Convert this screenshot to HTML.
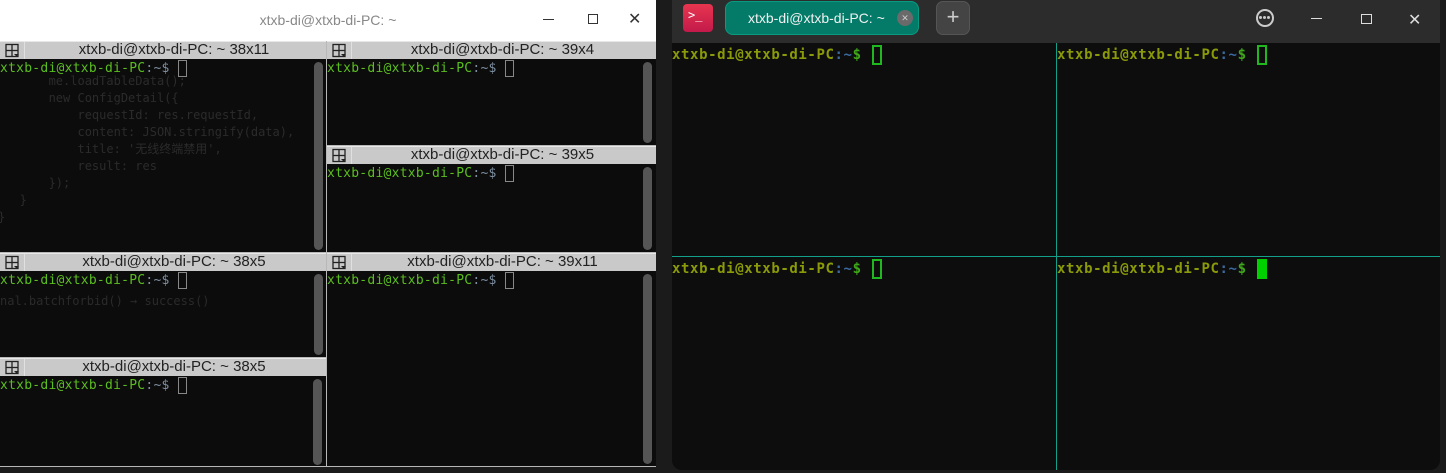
<!DOCTYPE html>
<html><head><meta charset="utf-8"><style>
*{margin:0;padding:0;box-sizing:border-box}
body{width:1446px;height:473px;background:#1b1b1b;position:relative;overflow:hidden;font-family:"Liberation Sans",sans-serif}
.a{position:absolute}
.hdr{position:absolute;height:18px;background:#c9c9c9;border-top:1px solid #e8e8e8;font-size:15px;color:#222;line-height:16px;text-align:center;padding-left:22px}
.hdr .ic{position:absolute;left:0;top:0;width:25px;height:17px;border-right:1px solid #e0e0e0}
.pane{position:absolute;background:#0c0c0c;overflow:hidden}
.p{font-family:"DejaVu Sans Mono","Liberation Mono",monospace;font-size:13px;line-height:17px;white-space:pre;color:#5bbe1f;letter-spacing:0.25px;padding-top:1px}
.p .t{color:#7d8ea0}
.cur{display:inline-block;width:9px;height:17px;border:1px solid #888;vertical-align:top;margin-left:8px}
.sb{position:absolute;width:9px;background:#555;border-radius:5px}
.ghost{font-family:"DejaVu Sans Mono",monospace;font-size:12px;line-height:17px;white-space:pre;color:#2a2a2a;position:absolute}
.q{font-family:"DejaVu Sans Mono","Liberation Mono",monospace;font-weight:bold;font-size:14px;line-height:20px;white-space:pre;color:#8a9a08;position:absolute;letter-spacing:0.6px}
.q .t{color:#3a6aa0}.q .d{color:#3fa81a}
.qc{display:inline-block;width:10px;height:20px;border:2px solid #1fb81f;vertical-align:top;margin-left:10px}
</style></head><body>
<div class="a" style="left:0;top:0;width:656px;height:41px;background:#fff;font-size:14px;color:#888;text-align:center;line-height:40px">xtxb-di@xtxb-di-PC: ~</div>
<div class="a" style="left:543px;top:19px;width:11px;height:1px;background:#333"></div>
<div class="a" style="left:588px;top:14px;width:10px;height:10px;border:1px solid #333"></div>
<div class="a" style="left:628px;top:9px;font-size:16px;color:#333">✕</div>

<div class="a" style="left:0;top:41px;width:656px;height:426px;background:#b8b8b8"></div>

<div class="hdr" style="left:0;top:41px;width:326px">xtxb-di@xtxb-di-PC: ~ 38x11<div class="ic"><svg width="20" height="17"><rect x="4" y="2.5" width="12" height="12" fill="none" stroke="#222" stroke-width="1.3"/><line x1="10" y1="3" x2="10" y2="14" stroke="#222" stroke-width="1.3"/><line x1="4" y1="8.5" x2="16" y2="8.5" stroke="#222" stroke-width="1.3"/><path d="M12 12h5l-2.5 2.5z" fill="#222"/></svg></div></div>
<div class="pane" style="left:0;top:59px;width:326px;height:193px">
<div class="ghost" style="left:-2px;top:14px;color:#2b2b2b">       me.loadTableData();
       new ConfigDetail({
           requestId: res.requestId,
           content: JSON.stringify(data),
           title: '无线终端禁用',
           result: res
       });
   }
}</div>
<div class="p">xtxb-di@xtxb-di-PC<span class="t">:~$</span><span class="cur"></span></div>
<div class="sb" style="left:314px;top:3px;height:188px"></div></div>

<div class="hdr" style="left:0;top:253px;width:326px">xtxb-di@xtxb-di-PC: ~ 38x5<div class="ic"><svg width="20" height="17"><rect x="4" y="2.5" width="12" height="12" fill="none" stroke="#222" stroke-width="1.3"/><line x1="10" y1="3" x2="10" y2="14" stroke="#222" stroke-width="1.3"/><line x1="4" y1="8.5" x2="16" y2="8.5" stroke="#222" stroke-width="1.3"/><path d="M12 12h5l-2.5 2.5z" fill="#222"/></svg></div></div>
<div class="pane" style="left:0;top:271px;width:326px;height:86px">
<div class="ghost" style="left:0;top:22px">nal.batchforbid() → success()</div>
<div class="p">xtxb-di@xtxb-di-PC<span class="t">:~$</span><span class="cur"></span></div>
<div class="sb" style="left:314px;top:3px;height:81px"></div></div>

<div class="hdr" style="left:0;top:358px;width:326px">xtxb-di@xtxb-di-PC: ~ 38x5<div class="ic"><svg width="20" height="17"><rect x="4" y="2.5" width="12" height="12" fill="none" stroke="#222" stroke-width="1.3"/><line x1="10" y1="3" x2="10" y2="14" stroke="#222" stroke-width="1.3"/><line x1="4" y1="8.5" x2="16" y2="8.5" stroke="#222" stroke-width="1.3"/><path d="M12 12h5l-2.5 2.5z" fill="#222"/></svg></div></div>
<div class="pane" style="left:0;top:376px;width:326px;height:90px">
<div class="p">xtxb-di@xtxb-di-PC<span class="t">:~$</span><span class="cur"></span></div>
<div class="sb" style="left:313px;top:3px;height:86px"></div></div>

<div class="hdr" style="left:327px;top:41px;width:329px">xtxb-di@xtxb-di-PC: ~ 39x4<div class="ic"><svg width="20" height="17"><rect x="4" y="2.5" width="12" height="12" fill="none" stroke="#222" stroke-width="1.3"/><line x1="10" y1="3" x2="10" y2="14" stroke="#222" stroke-width="1.3"/><line x1="4" y1="8.5" x2="16" y2="8.5" stroke="#222" stroke-width="1.3"/><path d="M12 12h5l-2.5 2.5z" fill="#222"/></svg></div></div>
<div class="pane" style="left:327px;top:59px;width:329px;height:86px">
<div class="p">xtxb-di@xtxb-di-PC<span class="t">:~$</span><span class="cur"></span></div>
<div class="sb" style="left:316px;top:3px;height:81px"></div></div>

<div class="hdr" style="left:327px;top:146px;width:329px">xtxb-di@xtxb-di-PC: ~ 39x5<div class="ic"><svg width="20" height="17"><rect x="4" y="2.5" width="12" height="12" fill="none" stroke="#222" stroke-width="1.3"/><line x1="10" y1="3" x2="10" y2="14" stroke="#222" stroke-width="1.3"/><line x1="4" y1="8.5" x2="16" y2="8.5" stroke="#222" stroke-width="1.3"/><path d="M12 12h5l-2.5 2.5z" fill="#222"/></svg></div></div>
<div class="pane" style="left:327px;top:164px;width:329px;height:88px">
<div class="p">xtxb-di@xtxb-di-PC<span class="t">:~$</span><span class="cur"></span></div>
<div class="sb" style="left:316px;top:3px;height:83px"></div></div>

<div class="hdr" style="left:327px;top:253px;width:329px">xtxb-di@xtxb-di-PC: ~ 39x11<div class="ic"><svg width="20" height="17"><rect x="4" y="2.5" width="12" height="12" fill="none" stroke="#222" stroke-width="1.3"/><line x1="10" y1="3" x2="10" y2="14" stroke="#222" stroke-width="1.3"/><line x1="4" y1="8.5" x2="16" y2="8.5" stroke="#222" stroke-width="1.3"/><path d="M12 12h5l-2.5 2.5z" fill="#222"/></svg></div></div>
<div class="pane" style="left:327px;top:271px;width:329px;height:195px">
<div class="p">xtxb-di@xtxb-di-PC<span class="t">:~$</span><span class="cur"></span></div>
<div class="sb" style="left:316px;top:3px;height:190px"></div></div>

<div class="a" style="left:672px;top:0;width:768px;height:470px;background:#111;border-radius:0 0 10px 10px;overflow:hidden">
 <div class="a" style="left:0;top:0;width:768px;height:43px;background:#2c2c2c"></div>
 <div class="a" style="left:11px;top:4px;width:30px;height:28px;border-radius:4px;background:linear-gradient(#e8364f,#c21a4a);color:#fff;font-family:'DejaVu Sans Mono',monospace;font-size:12px;line-height:22px;padding-left:5px">&gt;_</div>
 <div class="a" style="left:53px;top:1px;width:194px;height:34px;border-radius:8px;background:#047b68;border:1px solid #0a9a82;color:#f0f0f0;font-size:14px;line-height:32px;padding-left:22px;white-space:nowrap;overflow:hidden">xtxb-di@xtxb-di-PC: ~</div>
 <div class="a" style="left:225px;top:10px;width:16px;height:16px;border-radius:50%;background:#6a6a6a;color:#ccc;font-size:9px;text-align:center;line-height:16px">✕</div>
 <div class="a" style="left:264px;top:1px;width:34px;height:34px;border-radius:7px;background:#444;border:1px solid #555;color:#ccc;font-size:22px;text-align:center;line-height:30px">+</div>
 <div class="a" style="left:584px;top:9px;width:18px;height:18px;border-radius:50%;border:2px solid #ccc"></div>
 <div class="a" style="left:587px;top:16px;font-size:0"><span style="display:inline-block;width:3px;height:3px;background:#ccc;border-radius:50%;margin-right:1px"></span><span style="display:inline-block;width:3px;height:3px;background:#ccc;border-radius:50%;margin-right:1px"></span><span style="display:inline-block;width:3px;height:3px;background:#ccc;border-radius:50%"></span></div>
 <div class="a" style="left:639px;top:18px;width:11px;height:1px;background:#ddd"></div>
 <div class="a" style="left:689px;top:14px;width:11px;height:10px;border:1px solid #ddd"></div>
 <div class="a" style="left:736px;top:10px;font-size:16px;color:#ddd">✕</div>
 <div class="a" style="left:0;top:43px;width:768px;height:427px;background:#0d0d0d"></div>
 <div class="a" style="left:0;top:256px;width:768px;height:1px;background:#12a08a"></div>
 <div class="a" style="left:384px;top:43px;width:1px;height:427px;background:#12a08a"></div>
 <div class="q" style="left:0;top:45px">xtxb-di@xtxb-di-PC<span class="t">:~</span><span class="d">$</span><span class="qc"></span></div>
 <div class="q" style="left:385px;top:45px">xtxb-di@xtxb-di-PC<span class="t">:~</span><span class="d">$</span><span class="qc"></span></div>
 <div class="q" style="left:0;top:259px">xtxb-di@xtxb-di-PC<span class="t">:~</span><span class="d">$</span><span class="qc"></span></div>
 <div class="q" style="left:385px;top:259px">xtxb-di@xtxb-di-PC<span class="t">:~</span><span class="d">$</span><span class="qc" style="background:#00d000;border-color:#00d000"></span></div>
</div>
</body></html>
